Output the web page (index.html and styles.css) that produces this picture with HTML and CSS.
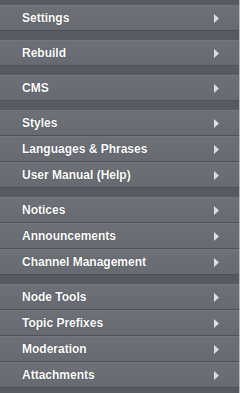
FILE: index.html
```html
<!DOCTYPE html>
<html lang="en">

<head>
    <meta charset="UTF-8">
    <meta name="viewport" content="width=device-width, initial-scale=1.0">
    <title>Admin Menu</title>
    <link rel="stylesheet" href="styles.css">
</head>

<body>
    <div class="sidebar">
        <ul class="group">
            <li class="item">Settings <svg class="arrow" viewBox="0 0 5 9"><path d="M0 0 L5 4.5 L0 9 Z"/></svg></li>
        </ul>
        <ul class="group">
            <li class="item">Rebuild <svg class="arrow" viewBox="0 0 5 9"><path d="M0 0 L5 4.5 L0 9 Z"/></svg></li>
        </ul>
        <ul class="group">
            <li class="item">CMS <svg class="arrow" viewBox="0 0 5 9"><path d="M0 0 L5 4.5 L0 9 Z"/></svg></li>
        </ul>
        <ul class="group">
            <li class="item">Styles <svg class="arrow" viewBox="0 0 5 9"><path d="M0 0 L5 4.5 L0 9 Z"/></svg></li>
            <li class="item">Languages &amp; Phrases <svg class="arrow" viewBox="0 0 5 9"><path d="M0 0 L5 4.5 L0 9 Z"/></svg></li>
            <li class="item">User Manual (Help) <svg class="arrow" viewBox="0 0 5 9"><path d="M0 0 L5 4.5 L0 9 Z"/></svg></li>
        </ul>
        <ul class="group">
            <li class="item">Notices <svg class="arrow" viewBox="0 0 5 9"><path d="M0 0 L5 4.5 L0 9 Z"/></svg></li>
            <li class="item">Announcements <svg class="arrow" viewBox="0 0 5 9"><path d="M0 0 L5 4.5 L0 9 Z"/></svg></li>
            <li class="item">Channel Management <svg class="arrow" viewBox="0 0 5 9"><path d="M0 0 L5 4.5 L0 9 Z"/></svg></li>
        </ul>
        <ul class="group">
            <li class="item">Node Tools <svg class="arrow" viewBox="0 0 5 9"><path d="M0 0 L5 4.5 L0 9 Z"/></svg></li>
            <li class="item">Topic Prefixes <svg class="arrow" viewBox="0 0 5 9"><path d="M0 0 L5 4.5 L0 9 Z"/></svg></li>
            <li class="item">Moderation <svg class="arrow" viewBox="0 0 5 9"><path d="M0 0 L5 4.5 L0 9 Z"/></svg></li>
            <li class="item">Attachments <svg class="arrow" viewBox="0 0 5 9"><path d="M0 0 L5 4.5 L0 9 Z"/></svg></li>
        </ul>
    </div>
</body>

</html>
```
FILE: styles.css
```css
body {
    margin: 0;
    background-color: #ffffff;
}

.sidebar {
    width: 240px;
    height: 393px;
    box-sizing: border-box;
    padding-top: 5px;
    background-color: #575a61;
    border-right: 1px solid #b9babd;
    display: flex;
    flex-direction: column;
    gap: 9px;
    font-family: "Liberation Sans", Arial, sans-serif;
}

.group {
    list-style: none;
    margin: 0;
    padding: 0;
}

.item {
    display: flex;
    justify-content: space-between;
    align-items: center;
    height: 25px;
    box-sizing: border-box;
    padding: 0 20px 0 22px;
    background: linear-gradient(#6d7077, #676a71);
    border-top: 1px solid #74777e;
    border-bottom: 1px solid #4e5157;
    height: 26px;
    color: #ffffff;
    font-size: 12px;
    font-weight: bold;
    text-shadow: 0 0 1px rgba(0, 0, 0, 0.5);
}

.arrow {
    width: 5px;
    height: 9px;
    fill: #dcdde0;
}
```
